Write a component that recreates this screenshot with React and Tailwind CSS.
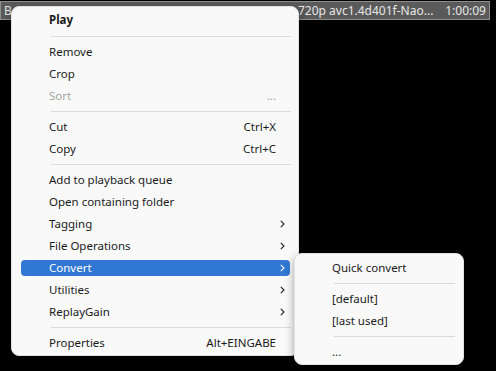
const mainItems = [
  { label: 'Play', bold: true },
  { sep: true, h: 'h-[10px]' },
  { label: 'Remove' },
  { label: 'Crop' },
  { label: 'Sort', disabled: true, shortcut: '...' },
  { sep: true },
  { label: 'Cut', shortcut: 'Ctrl+X' },
  { label: 'Copy', shortcut: 'Ctrl+C' },
  { sep: true },
  { label: 'Add to playback queue' },
  { label: 'Open containing folder' },
  { label: 'Tagging', sub: true },
  { label: 'File Operations', sub: true },
  { label: 'Convert', sub: true, active: true },
  { label: 'Utilities', sub: true },
  { label: 'ReplayGain', sub: true },
  { sep: true },
  { label: 'Properties', shortcut: 'Alt+EINGABE' },
];

const convertItems = [
  { label: 'Quick convert' },
  { sep: true },
  { label: '[default]' },
  { label: '[last used]' },
  { sep: true },
  { label: '...' },
];

function Chevron({ light }) {
  return (
    <svg width="5" height="8" viewBox="0 0 5 8" className="absolute right-[13px] top-[7px]">
      <path d="M0.8 0.8 L4 4 L0.8 7.2" fill="none" stroke={light ? '#ffffff' : '#1f1f1f'} strokeWidth="1.1" />
    </svg>
  );
}

function MenuRow({ item }) {
  if (item.sep) {
    return (
      <div className={`${item.h || 'h-[9px]'} flex items-center pl-[39px] pr-[7px]`}>
        <div className="h-px w-full bg-[#d9d9d9]" />
      </div>
    );
  }
  return (
    <div className="relative h-[22px] py-[3px] pl-[9px] pr-[8px]">
      <div className={`h-[16px] rounded-[4px] ${item.active ? 'bg-[#3178d2]' : ''}`} />
      <div
        className={`absolute inset-0 flex items-center pl-[37px] pr-[22px] ${
          item.active ? 'text-white' : item.disabled ? 'text-[#a3a3a3]' : 'text-[#1a1a1a]'
        } ${item.bold ? 'font-bold' : ''}`}
      >
        <span className="flex-1">{item.label}</span>
        {item.shortcut && <span>{item.shortcut}</span>}
      </div>
      {item.sub && <Chevron light={item.active} />}
    </div>
  );
}

export default function App() {
  return (
    <div
      className="relative w-[496px] h-[371px] bg-black overflow-hidden text-[11.5px] leading-none"
      style={{ fontFamily: '"Noto Sans", "Open Sans", sans-serif' }}
    >
      <div className="mt-px h-[19px] w-[490px] bg-[#5a5a5a] border border-[#8e8e8e] flex items-center text-[#e6e6e6] pl-[3px] pr-[3px] text-[12px]">
        <span className="w-[294px]">B</span>
        <span className="flex-1">720p avc1.4d401f-Nao...</span>
        <span>1:00:09</span>
      </div>

      <div className="absolute left-[11px] top-[6px] w-[288px] h-[350px] rounded-[8px] bg-[#f9f9f9] py-[2px] shadow-[0_4px_10px_rgba(0,0,0,0.35)] border border-[#e2e2e2]">
        {mainItems.map((item, i) => (
          <MenuRow key={i} item={item} />
        ))}
      </div>

      <div className="absolute left-[294px] top-[253px] w-[170px] h-[112px] rounded-[8px] bg-[#f9f9f9] py-[3px] shadow-[0_4px_10px_rgba(0,0,0,0.35)] border border-[#e2e2e2]">
        {convertItems.map((item, i) =>
          item.sep ? (
            <div key={i} className="h-[9px] flex items-center pl-[39px] pr-[8px]">
              <div className="h-px w-full bg-[#d9d9d9]" />
            </div>
          ) : (
            <div key={i} className="h-[22px] flex items-center pl-[37px] text-[#1a1a1a]">
              {item.label}
            </div>
          )
        )}
      </div>
    </div>
  );
}
